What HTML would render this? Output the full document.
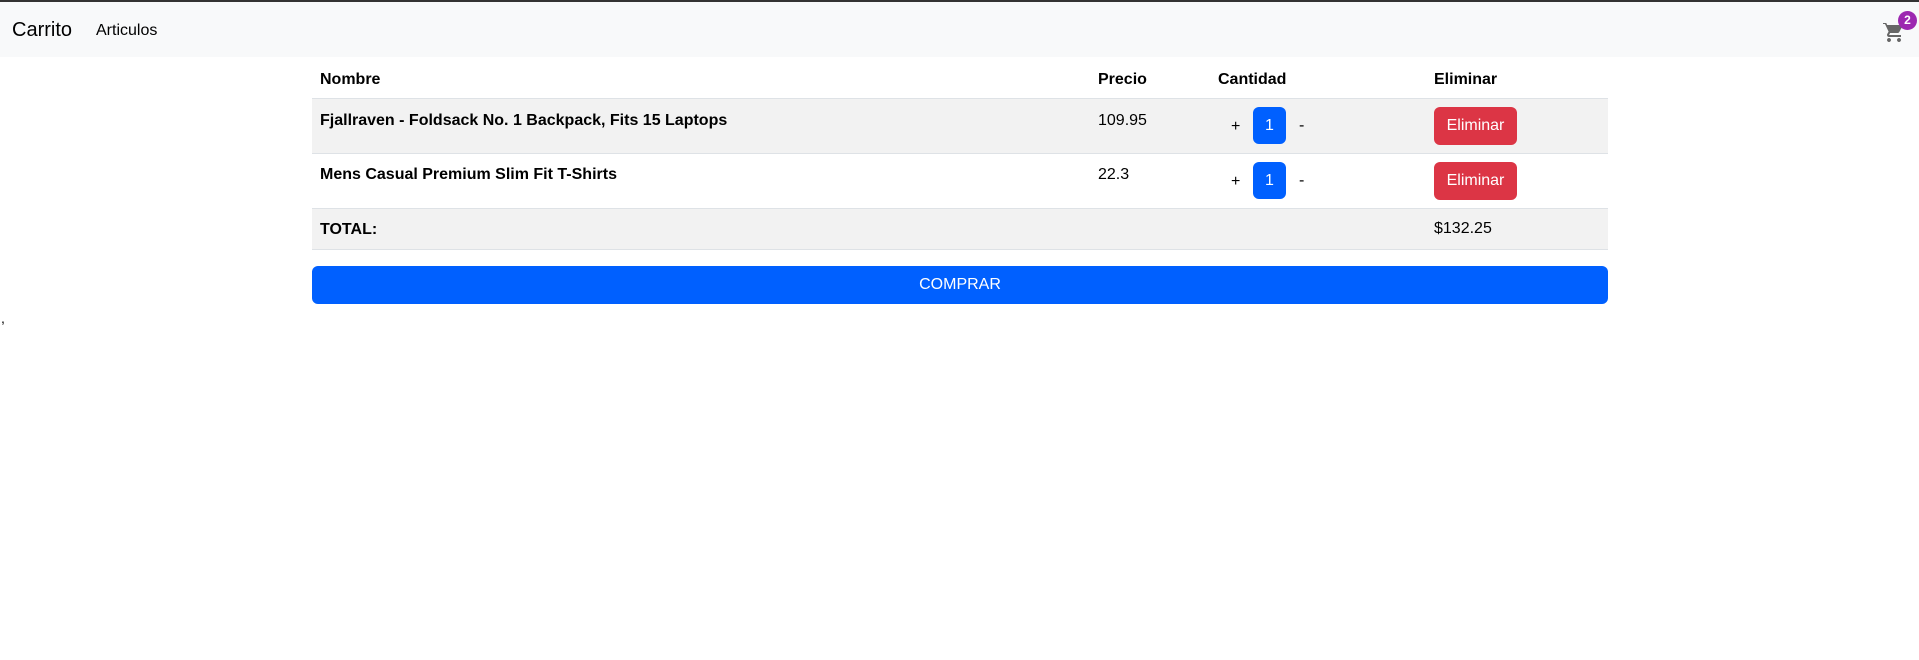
<!DOCTYPE html>
<html><head><meta charset="utf-8"><style>
*{box-sizing:border-box;margin:0;padding:0}
body{width:1919px;height:660px;background:#fff;font-family:"Liberation Sans",sans-serif;font-size:16px;color:#000;position:relative;overflow:hidden}
.top{position:absolute;left:0;top:0;width:1919px;height:2px;background:#333}
.nav{position:absolute;left:0;top:2px;width:1919px;height:55px;background:#f8f9fa}
.brand{position:absolute;left:12px;top:17px;font-size:20px}
.link{position:absolute;left:96px;top:20px;font-size:16px}
.abs{position:absolute}
.row{position:absolute;left:312px;width:1296px;border-bottom:1px solid #dee2e6}
b{font-weight:bold}
.qty{position:absolute;width:33px;height:37px;background:#0060ff;border-radius:6px;color:#fff;text-align:center;line-height:37px}
.del{position:absolute;left:1434px;width:83px;height:38px;background:#dc3545;border-radius:6px;color:#fff;text-align:center;line-height:38px}
.buy{position:absolute;left:312px;top:266px;width:1296px;height:38px;background:#0060ff;border-radius:6px;color:#fff;text-align:center;line-height:38px}
</style></head><body>
<div class="top"></div>
<div class="nav"><div class="brand">Carrito</div><div class="link">Articulos</div>
<svg class="abs" style="left:1882px;top:18px" width="24" height="24" viewBox="0 0 24 24"><path fill="#666" d="M7 18c-1.1 0-2 .9-2 2s.9 2 2 2 2-.9 2-2-.9-2-2-2zM1 2v2h2l3.6 7.59-1.350 2.45C5.09 14.32 5 14.65 5 15c0 1.1.9 2 2 2h12v-2H7.42c-.14 0-.25-.11-.25-.25l.03-.12.9-1.63h7.45c.75 0 1.41-.41 1.75-1.03L21 5H5.21l-.94-2H1zm16 16c-1.1 0-2 .9-2 2s.9 2 2 2 2-.9 2-2-.9-2-2-2z"/></svg>
<div class="abs" style="left:1898px;top:9px;width:19px;height:19px;border-radius:50%;background:#9c27b0;color:#fff;font-size:12px;font-weight:bold;text-align:center;line-height:19px">2</div>
</div>
<div class="row" style="top:58px;height:41px"></div>
<b class="abs" style="left:320px;top:71px">Nombre</b>
<b class="abs" style="left:1098px;top:71px">Precio</b>
<b class="abs" style="left:1218px;top:71px">Cantidad</b>
<b class="abs" style="left:1434px;top:71px">Eliminar</b>
<div class="row" style="top:99px;height:55px;background:#f2f2f2"></div>
<b class="abs" style="left:320px;top:112px">Fjallraven - Foldsack No. 1 Backpack, Fits 15 Laptops</b>
<div class="abs" style="left:1098px;top:112px">109.95</div>
<div class="abs" style="left:1231px;top:118px">+</div>
<div class="qty" style="left:1253px;top:107px">1</div>
<div class="abs" style="left:1299px;top:117px">-</div>
<div class="del" style="top:107px">Eliminar</div>
<div class="row" style="top:154px;height:55px"></div>
<b class="abs" style="left:320px;top:166px">Mens Casual Premium Slim Fit T-Shirts</b>
<div class="abs" style="left:1098px;top:166px">22.3</div>
<div class="abs" style="left:1231px;top:173px">+</div>
<div class="qty" style="left:1253px;top:162px">1</div>
<div class="abs" style="left:1299px;top:172px">-</div>
<div class="del" style="top:162px">Eliminar</div>
<div class="row" style="top:209px;height:41px;background:#f2f2f2"></div>
<b class="abs" style="left:320px;top:221px">TOTAL:</b>
<div class="abs" style="left:1434px;top:220px">$132.25</div>
<div class="buy">COMPRAR</div>
<div class="abs" style="left:1px;top:310px;font-size:14px">,</div>
</body></html>
